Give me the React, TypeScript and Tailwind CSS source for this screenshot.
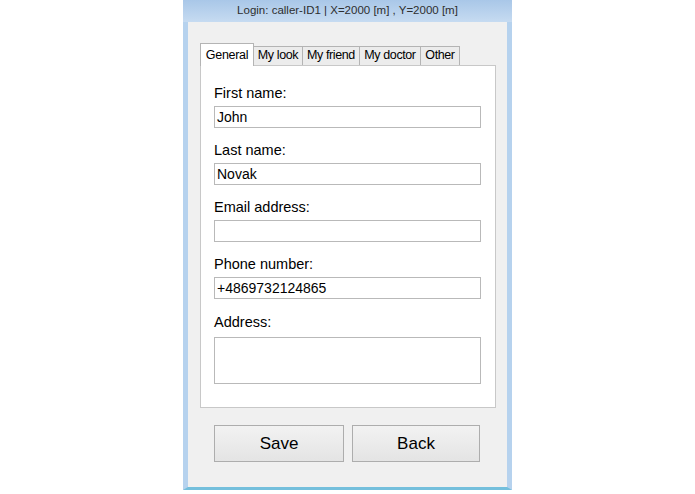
const fields = [
  { label: "First name:", value: "John" },
  { label: "Last name:", value: "Novak" },
  { label: "Email address:", value: "" },
  { label: "Phone number:", value: "+4869732124865" },
];

const tabs = [
  { name: "My look", w: "w-[49px]" },
  { name: "My friend", w: "w-[57px]" },
  { name: "My doctor", w: "w-[61px]" },
  { name: "Other", w: "w-[39px]" },
];

export default function App() {
  return (
    <div className="flex h-[494px] w-[695px] justify-center bg-white font-['Liberation_Sans',Arial,sans-serif] text-black">
      <div className="flex h-[490px] w-[329px] flex-col">
        {/* title bar */}
        <div className="flex h-[22px] items-center justify-center bg-gradient-to-b from-[#a9c7e8] to-[#c6dbf1] text-[11.5px] text-[#2e2e2e]">
          Login: caller-ID1 | X=2000 [m] , Y=2000 [m]
        </div>

        <div className="flex flex-1 flex-col border-x-[5px] border-b-[3px] border-x-[#b6d2ee] border-b-[#74bfdc] bg-[#f0f0f0] pl-[12px] pt-[21px]">
          {/* tab strip */}
          <div className="relative z-10 -mb-px flex h-[23px] items-end text-[12.5px]">
            <div className="h-[23px] w-[54px] border border-b-0 border-[#b4b4b4] bg-white pt-[4px] text-center leading-[14px] tracking-[-0.3px]">
              General
            </div>
            {tabs.map((t) => (
              <div
                key={t.name}
                className={`mb-px h-[19px] ${t.w} border-r border-t border-[#b4b4b4] bg-[#ececec] pt-[1px] text-center leading-[14px] tracking-[-0.4px]`}
              >
                {t.name}
              </div>
            ))}
          </div>

          {/* tab page */}
          <div className="flex h-[343px] w-[296px] flex-col gap-[14px] border border-[#c8c8c8] bg-white pl-[13px] pt-[19px]">
            {fields.map((f) => (
              <div key={f.label} className="flex flex-col">
                <div className="mb-[4px] h-[17px] text-[14.5px] leading-[17px]">{f.label}</div>
                <div className="flex h-[22px] w-[267px] items-center border border-[#b9b9b9] bg-white pl-[2px] text-[14px]">
                  {f.value}
                </div>
              </div>
            ))}
            <div className="mt-[1px] flex flex-col">
              <div className="mb-[6px] h-[17px] text-[14.5px] leading-[17px]">Address:</div>
              <div className="h-[47px] w-[267px] border border-[#b9b9b9] bg-white" />
            </div>
          </div>

          {/* buttons */}
          <div className="ml-[14px] mt-[17px] flex gap-[8px]">
            <div className="flex h-[37px] w-[130px] items-center justify-center border border-[#adadad] bg-gradient-to-b from-[#f2f2f2] to-[#e4e4e4] text-[17px]">
              Save
            </div>
            <div className="flex h-[37px] w-[128px] items-center justify-center border border-[#adadad] bg-gradient-to-b from-[#f2f2f2] to-[#e4e4e4] text-[17px]">
              Back
            </div>
          </div>
        </div>
      </div>
    </div>
  );
}
